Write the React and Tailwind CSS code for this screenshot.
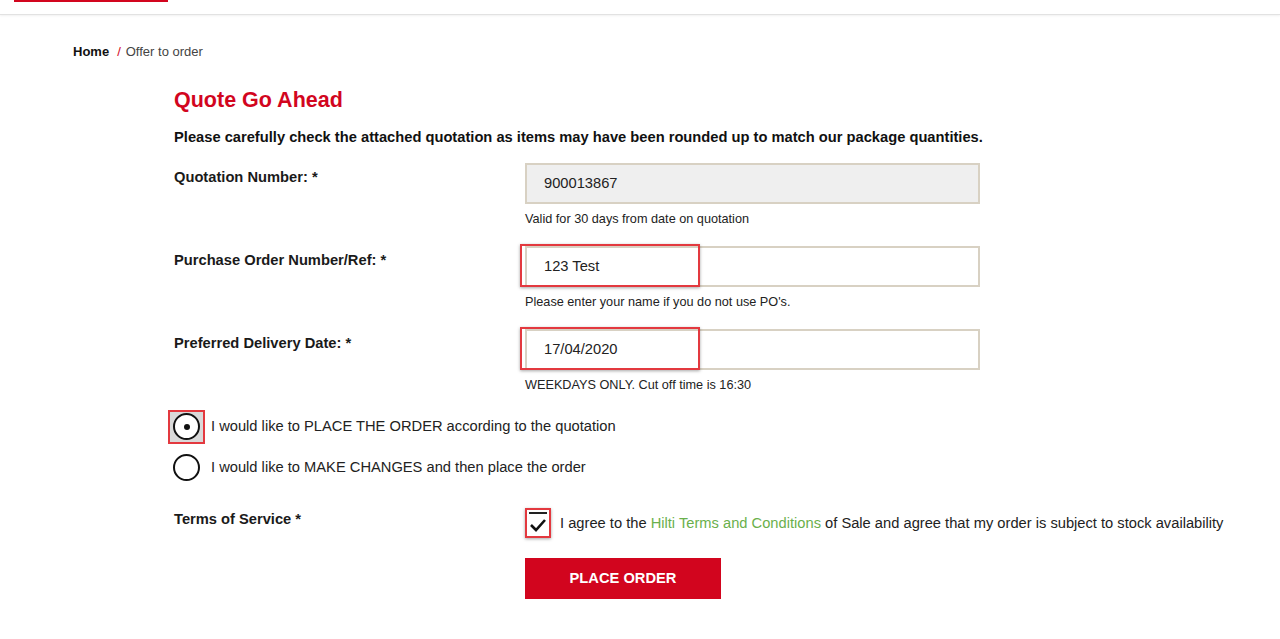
const RED = 'text-[#d2051e]'

function Field({ label, value, help, disabled, marked }) {
  return (
    <div className="flex">
      <div className="w-[351px] shrink-0 pt-[3px] text-[14.7px] font-bold text-[#1a1a1a]">{label}</div>
      <div className="w-[455px]">
        <div className="relative">
          <div className={`h-[41px] border-2 border-[#d8d1c3] px-[17px] flex items-center text-[14.7px] text-[#222] ${disabled ? 'bg-[#efefef]' : 'bg-white'}`}>
            {value}
          </div>
          {marked && (
            <div className="absolute left-[-5px] top-[-2px] w-[180px] h-[43px] border-2 border-[#e3393f] shadow-[0_1px_3px_rgba(0,0,0,0.35)]" />
          )}
        </div>
        <p className="mt-[7px] text-[12.7px] text-[#222] leading-[16px]">{help}</p>
      </div>
    </div>
  )
}

function Radio({ checked, marked, children }) {
  return (
    <div className="flex items-center h-[37px]">
      <div className="relative w-[37px] h-[34px] flex items-center justify-center">
        {marked && <div className="absolute inset-0 border-2 border-[#e3393f] bg-[#d9d9d9]" />}
        <div className="relative w-[27px] h-[27px] rounded-full border-2 border-[#111] bg-white flex items-center justify-center">
          {checked && <div className="w-[6px] h-[6px] rounded-full bg-[#111]" />}
        </div>
      </div>
      <span className="ml-[6px] text-[14.7px] text-[#222]">{children}</span>
    </div>
  )
}

export default function App() {
  return (
    <div className="min-h-[639px] bg-white font-['Liberation_Sans',Arial,sans-serif] text-[#222]">
      <header className="h-[15px] border-b border-[#e2e2e2] shadow-[0_1px_2px_rgba(0,0,0,0.06)]">
        <div className="ml-[14px] w-[154px] h-[2px] bg-[#d2051e]" />
      </header>

      <nav className="pl-[73px] pt-[29px] text-[13px] leading-[16px] flex items-center">
        <span className="font-bold text-[#111]">Home</span>
        <span className={`ml-[8px] mr-[5px] ${RED}`}>/</span>
        <span className="text-[#444]">Offer to order</span>
      </nav>

      <main className="pl-[174px]">
        <h1 className={`mt-[27px] text-[21.5px] leading-[26px] font-bold ${RED}`}>Quote Go Ahead</h1>
        <p className="mt-[15px] text-[14.7px] leading-[18px] font-bold text-[#111]">
          Please carefully check the attached quotation as items may have been rounded up to match our package quantities.
        </p>

        <div className="mt-[17px] flex flex-col gap-[19px]">
          <Field label="Quotation Number: *" value="900013867" help="Valid for 30 days from date on quotation" disabled />
          <Field label="Purchase Order Number/Ref: *" value="123 Test" help="Please enter your name if you do not use PO's." marked />
          <Field label="Preferred Delivery Date: *" value="17/04/2020" help="WEEKDAYS ONLY. Cut off time is 16:30" marked />
        </div>

        <div className="mt-[15px] ml-[-6px] flex flex-col gap-[4px]">
          <Radio checked marked>I would like to PLACE THE ORDER according to the quotation</Radio>
          <Radio>I would like to MAKE CHANGES and then place the order</Radio>
        </div>

        <div className="mt-[22px] flex">
          <div className="w-[351px] shrink-0 text-[14.7px] font-bold text-[#1a1a1a]">Terms of Service *</div>
          <div>
            <div className="flex items-center">
              <div className="relative w-[26px] h-[30px] border-2 border-[#e3393f] shadow-[0_1px_3px_rgba(0,0,0,0.35)] bg-white flex items-center justify-center">
                <div className="absolute left-[2px] right-[2px] top-[2px] h-[2px] bg-[#222]" />
                <svg width="18" height="14" viewBox="0 0 18 14" className="mt-[3px]">
                  <path d="M2 7 L7 12 L16 2" fill="none" stroke="#111" strokeWidth="2.6" />
                </svg>
              </div>
              <span className="ml-[9px] text-[14.7px] text-[#222]">
                I agree to the <span className="text-[#6ab04c]">Hilti Terms and Conditions</span> of Sale and agree that my order is subject to stock availability
              </span>
            </div>
            <button className="mt-[20px] w-[196px] h-[41px] bg-[#d2051e] text-white text-[14.7px] font-bold">
              PLACE ORDER
            </button>
          </div>
        </div>
      </main>
    </div>
  )
}
